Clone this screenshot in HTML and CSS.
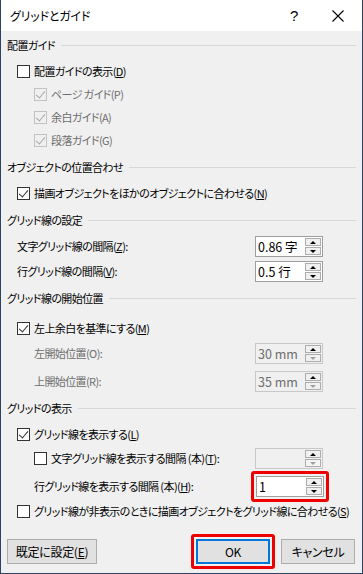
FILE: index.html
```html
<!DOCTYPE html>
<html lang="ja">
<head>
    <meta charset="UTF-8">
    <meta name="viewport" content="width=device-width, initial-scale=1">
    <title>グリッドとガイド</title>
    <link rel="stylesheet" href="styles.css">
</head>
<body>
    <div class="dialog">
        <div class="titlebar">
            <span class="title">グリッドとガイド</span>
            <span class="help">?</span>
            <span class="close">
                <svg width="12" height="12" viewBox="0 0 12 12"><path d="M0.5 0.5 L11.5 11.5 M11.5 0.5 L0.5 11.5" stroke="#000" stroke-width="1.1" fill="none"/></svg>
            </span>
        </div>

        <div class="body">
            <div class="group-title first"><span>配置ガイド</span></div>
            <div class="row indent1 after-title">
                <span class="check"></span>
                <label>配置ガイドの表示(<u>D</u>)</label>
            </div>
            <div class="row indent2 sub disabled">
                <span class="check checked"></span>
                <label>ページ ガイド(P)</label>
            </div>
            <div class="row indent2 sub disabled">
                <span class="check checked"></span>
                <label>余白ガイド(A)</label>
            </div>
            <div class="row indent2 sub disabled">
                <span class="check checked"></span>
                <label>段落ガイド(G)</label>
            </div>

            <div class="group-title"><span>オブジェクトの位置合わせ</span></div>
            <div class="row indent1 after-title">
                <span class="check checked"></span>
                <label>描画オブジェクトをほかのオブジェクトに合わせる(<u>N</u>)</label>
            </div>

            <div class="group-title"><span>グリッド線の設定</span></div>
            <div class="row indent1 after-title">
                <label>文字グリッド線の間隔(<u>Z</u>):</label>
                <div class="spin">
                    <span class="value">0.86 字</span>
                    <span class="arrows"><i class="up"></i><i class="down"></i></span>
                </div>
            </div>
            <div class="row indent1">
                <label>行グリッド線の間隔(<u>V</u>):</label>
                <div class="spin">
                    <span class="value">0.5 行</span>
                    <span class="arrows"><i class="up"></i><i class="down"></i></span>
                </div>
            </div>

            <div class="group-title"><span>グリッド線の開始位置</span></div>
            <div class="row indent1 after-title loose">
                <span class="check checked"></span>
                <label>左上余白を基準にする(<u>M</u>)</label>
            </div>
            <div class="row indent2 disabled">
                <label>左開始位置(O):</label>
                <div class="spin">
                    <span class="value">30 mm</span>
                    <span class="arrows"><i class="up"></i><i class="down"></i></span>
                </div>
            </div>
            <div class="row indent2 disabled wide">
                <label>上開始位置(R):</label>
                <div class="spin">
                    <span class="value">35 mm</span>
                    <span class="arrows"><i class="up"></i><i class="down"></i></span>
                </div>
            </div>

            <div class="group-title"><span>グリッドの表示</span></div>
            <div class="row indent1 after-title">
                <span class="check checked"></span>
                <label>グリッド線を表示する(<u>L</u>)</label>
            </div>
            <div class="row indent2 tight">
                <span class="check"></span>
                <label>文字グリッド線を表示する間隔 (本)(<u>T</u>):</label>
                <div class="spin off">
                    <span class="value"></span>
                    <span class="arrows"><i class="up"></i><i class="down"></i></span>
                </div>
            </div>
            <div class="row indent2 wide">
                <label>行グリッド線を表示する間隔 (本)(<u>H</u>):</label>
                <div class="highlight">
                    <div class="spin">
                        <span class="value">1</span>
                        <span class="arrows"><i class="up"></i><i class="down"></i></span>
                    </div>
                </div>
            </div>
            <div class="row indent1 last">
                <span class="check"></span>
                <label>グリッド線が非表示のときに描画オブジェクトをグリッド線に合わせる(<u>S</u>)</label>
            </div>

            <div class="buttons">
                <button class="btn reset">既定に設定(<u>E</u>)</button>
                <div class="highlight btn-wrap">
                    <button class="btn default">OK</button>
                </div>
                <button class="btn">キャンセル</button>
            </div>
        </div>
    </div>
</body>
</html>
```

FILE: styles.css
```css
* {
    margin: 0;
    padding: 0;
    box-sizing: border-box;
}

body {
    font-family: 'Noto Sans CJK JP', 'Noto Sans', sans-serif;
    font-size: 11px;
    font-feature-settings: "palt";
    letter-spacing: -0.6px;
    color: #000;
    background: #fff;
}

.dialog {
    width: 363px;
    height: 574px;
    border: 1px solid #2b4462;
    border-top: none;
    background: #f0f0f0;
    overflow: hidden;
}

.titlebar {
    height: 31px;
    background: #fff;
    display: flex;
    align-items: center;
    padding-left: 9px;
}

.title {
    flex: 1;
    font-size: 12px;
    letter-spacing: -0.2px;
}

.help {
    width: 20px;
    margin-right: 22px;
    font-size: 15px;
    font-family: 'Liberation Sans', sans-serif;
    letter-spacing: 0;
}

.close {
    width: 30px;
    display: flex;
    align-items: center;
}

.body {
    padding: 3px 6px 0 6px;
    display: flex;
    flex-direction: column;
}

/* section header with rule */
.group-title {
    height: 22px;
    display: flex;
    align-items: center;
    margin-top: 5px;
}

.group-title.first {
    margin-top: 0;
}

.group-title::after {
    content: "";
    flex: 1;
    height: 1px;
    background: #d8d8d8;
    margin-left: 6px;
}

.row {
    height: 22px;
    display: flex;
    align-items: center;
    margin-top: 3px;
}

.row.after-title { margin-top: 4px; }
.row.sub { margin-top: 1px; }
.row.loose { margin-top: 8px; }
.row.wide { margin-top: 6px; }
.row.tight { margin-top: 2px; }
.row.last { margin-top: 3px; }

.indent1 { padding-left: 10px; }
.indent2 { padding-left: 27px; }

.row label {
    flex: 1;
    white-space: nowrap;
}

.disabled label {
    color: #6d6d6d;
}

.check {
    width: 13px;
    height: 13px;
    border: 1px solid #333;
    background: #fff;
    margin-right: 4px;
    position: relative;
    flex: none;
}

.check.checked::after {
    content: "";
    position: absolute;
    left: 3px;
    top: 0px;
    width: 4px;
    height: 8px;
    border-right: 1.3px solid #333;
    border-bottom: 1.3px solid #333;
    transform: rotate(40deg);
}

.disabled .check {
    border-color: #c2c2c2;
    background: #f0f0f0;
}

.disabled .check.checked::after {
    border-color: #a8a8a8;
}

/* spinner fields */
.spin {
    width: 68px;
    height: 21px;
    border: 1px solid #9e9e9e;
    background: #fff;
    display: flex;
    margin-right: 33px;
    flex: none;
}

.highlight .spin {
    margin-right: 0;
}

.spin .value {
    flex: 1;
    padding-left: 2px;
    line-height: 19px;
    font-size: 12.5px;
    letter-spacing: 0;
}

.spin .arrows {
    width: 17px;
    display: flex;
    flex-direction: column;
    justify-content: center;
    gap: 1px;
    padding: 1px 1px 1px 0;
}

.spin .arrows i {
    flex: 1;
    border: 1px solid #acacac;
    background: #f0f0f0;
    position: relative;
}

.spin .arrows i::after {
    content: "";
    position: absolute;
    left: 4px;
    border-left: 3px solid transparent;
    border-right: 3px solid transparent;
}

.spin .arrows .up::after {
    top: 2px;
    border-bottom: 3px solid #000;
}

.spin .arrows .down::after {
    top: 2px;
    border-top: 3px solid #000;
}

.disabled .spin,
.spin.off {
    background: #f0f0f0;
    border-color: #c8c8c8;
}

.disabled .spin .value {
    color: #6d6d6d;
}

.disabled .spin .arrows .down::after,
.spin.off .arrows .down::after {
    border-top-color: #a0a0a0;
}

.spin.off .arrows .down {
    background: #f4f4f4;
}

/* red annotation boxes */
.highlight {
    border: 3px solid #ee0000;
    border-radius: 3px;
    padding: 2px;
    margin-right: 27px;
    flex: none;
}

.buttons {
    margin-top: 12px;
    display: flex;
    align-items: center;
    height: 35px;
}

.btn {
    font-family: inherit;
    font-size: 12px;
    font-feature-settings: "palt";
    letter-spacing: -0.3px;
    height: 25px;
    width: 74px;
    background: #e1e1e1;
    border: 1px solid #adadad;
    color: #000;
    white-space: nowrap;
    flex: none;
}

.btn.reset {
    width: 90px;
    margin-right: 94px;
}

.btn-wrap {
    padding: 2px;
    margin-right: 6px;
}

.btn.default {
    border: 2px solid #0078d7;
    display: block;
}
```
